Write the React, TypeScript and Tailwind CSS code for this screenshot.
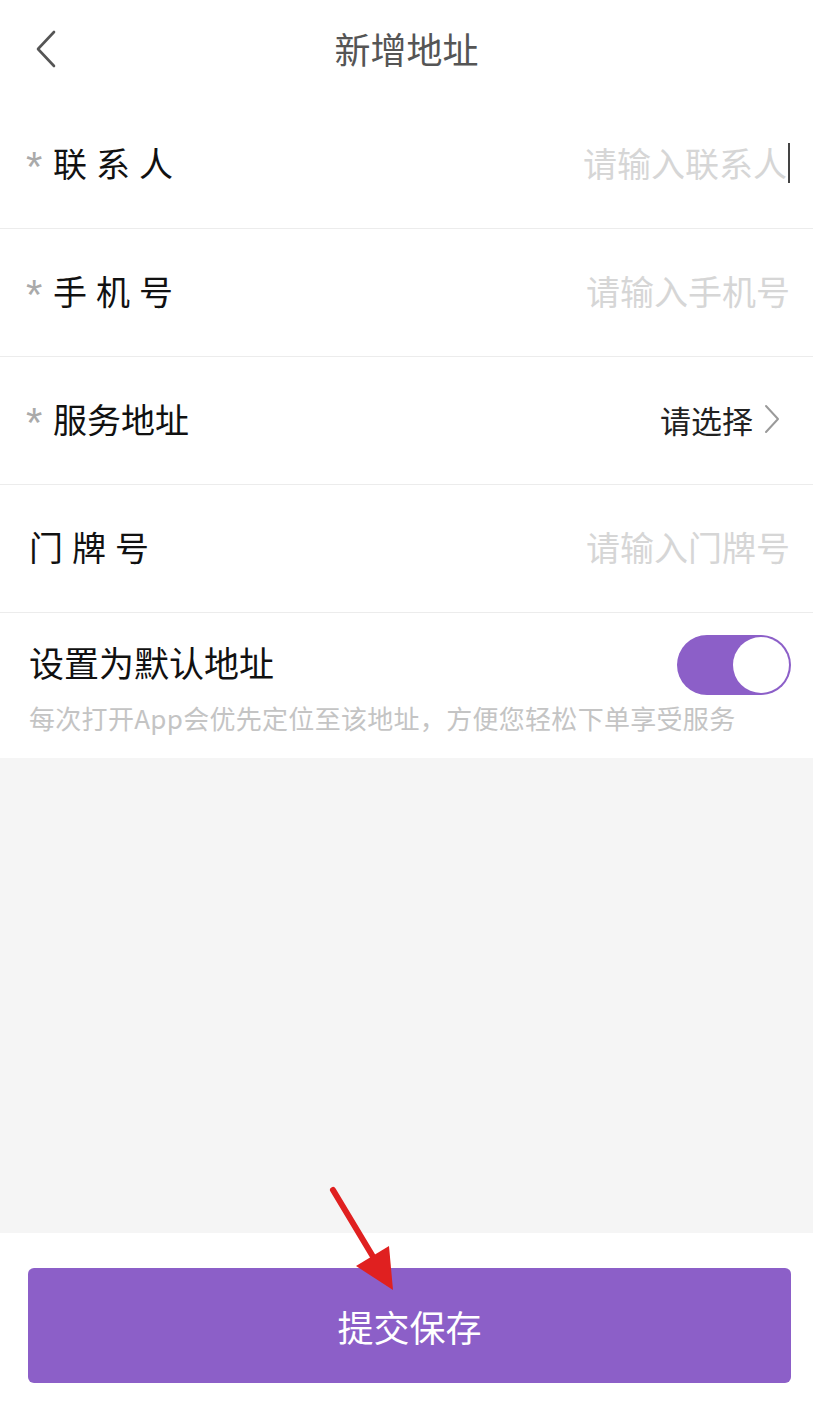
import { useState } from "react";

const font = "font-['Noto_Sans_CJK_SC','Noto_Sans',sans-serif]";

const fields = [
  { label: "联系人", required: true, placeholder: "请输入联系人", cursor: true },
  { label: "手机号", required: true, placeholder: "请输入手机号" },
  { label: "服务地址", required: true, select: true },
  { label: "门牌号", required: false, placeholder: "请输入门牌号" },
];

const Chevron = ({ dir }: { dir: "left" | "right" }) =>
  dir === "left" ? (
    <svg width="24" height="38" viewBox="0 0 24 38" fill="none">
      <path d="M20 2 L4 19 L20 36" stroke="#555" strokeWidth="2.6" strokeLinecap="round" strokeLinejoin="round" />
    </svg>
  ) : (
    <svg width="18" height="30" viewBox="0 0 18 30" fill="none">
      <path d="M3 2 L15 15 L3 28" stroke="#9a9a9a" strokeWidth="2" strokeLinecap="round" strokeLinejoin="round" />
    </svg>
  );

export default function App() {
  const [isDefault, setIsDefault] = useState(true);

  return (
    <div className={`relative w-[813px] h-[1402px] flex flex-col bg-[#f5f5f5] ${font}`}>
      {/* Header */}
      <div className="h-[100px] bg-white grid grid-cols-[100px_1fr_100px] items-center">
        <button className="pl-[34px] pb-[3px] flex items-center">
          <Chevron dir="left" />
        </button>
        <h1 className="text-center text-[36px] text-[#555] leading-none pb-[4px]">新增地址</h1>
        <div />
      </div>

      {/* Fields */}
      <div className="bg-white">
        {fields.map((f, i) => (
          <div
            key={f.label}
            className={`flex items-center justify-between pr-[23px] border-b border-[#ececec] ${
              i === 0 ? "h-[129px]" : "h-[128px]"
            } ${f.required ? "pl-[26px]" : "pl-[29px]"}`}
          >
            <div className="flex items-center -mt-[3px]">
              {f.required && (
                <span className="font-['Liberation_Sans',sans-serif] text-[42px] text-[#aaa] leading-none w-[27px] mt-[8px]">
                  *
                </span>
              )}
              <span
                className={`text-[34px] text-[#111] leading-none ${
                  f.label.length === 3 ? "tracking-[9px]" : ""
                }`}
              >
                {f.label}
              </span>
            </div>
            {f.select ? (
              <div className="flex items-center gap-[10px] pr-[9px] -mt-[3px]">
                <span className="text-[31px] text-[#222] leading-none">请选择</span>
                <Chevron dir="right" />
              </div>
            ) : (
              <div className="flex items-center -mt-[3px]">
                <span className="text-[34px] text-[#d6d6d6] leading-none">{f.placeholder}</span>
                {f.cursor && <span className="w-[2px] h-[40px] bg-[#444] ml-[1px]" />}
              </div>
            )}
          </div>
        ))}

        {/* Default toggle */}
        <div className="h-[145px] pl-[29px] pr-[22px] pt-[22px]">
          <div className="flex items-center justify-between">
            <span className="text-[35px] text-[#111] leading-none -mt-[8px]">设置为默认地址</span>
            <button
              onClick={() => setIsDefault(!isDefault)}
              className={`w-[114px] h-[60px] rounded-full flex items-center p-[2px] ${
                isDefault ? "bg-[#8c5fc8] justify-end" : "bg-[#e5e5e5] justify-start"
              }`}
            >
              <span className="w-[56px] h-[56px] rounded-full bg-white" />
            </button>
          </div>
          <p className="text-[26px] text-[#c4c4c4] leading-none mt-[10px] tracking-[0.3px] whitespace-nowrap">
            每次打开App会优先定位至该地址，方便您轻松下单享受服务
          </p>
        </div>
      </div>

      <div className="flex-1" />

      {/* Bottom */}
      <div className="h-[169px] bg-white pt-[35px] pl-[28px] pr-[22px]">
        <button className="w-full h-[115px] rounded-[6px] bg-[#8c5fc8] text-white text-[36px] leading-none">
          提交保存
        </button>
      </div>

      {/* annotation arrow */}
      <svg
        className="absolute left-0 top-0 pointer-events-none"
        width="813"
        height="1402"
        viewBox="0 0 813 1402"
      >
        <line x1="333" y1="1190" x2="375" y2="1260" stroke="#e02020" strokeWidth="6" strokeLinecap="round" />
        <polygon points="393,1290 389,1246 356,1266" fill="#e02020" />
      </svg>
    </div>
  );
}
